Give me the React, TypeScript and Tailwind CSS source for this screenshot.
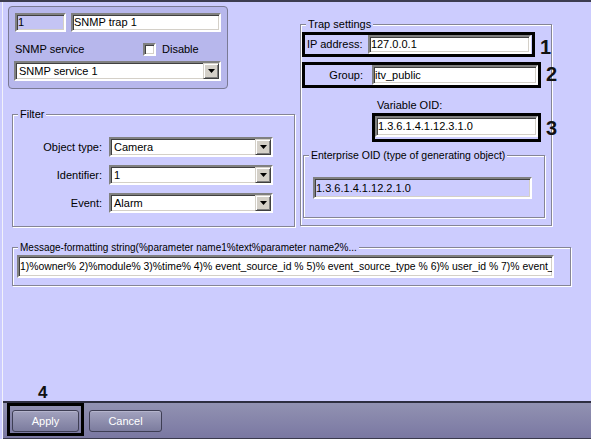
import clsx from 'clsx'
import type { ReactNode } from 'react'

const sunken =
  'border-2 border-t-[#808080] border-l-[#808080] border-r-white border-b-white shadow-[inset_1px_1px_0_#404040,inset_-1px_-1px_0_#d4d0c8]'

function TextBox({ value, className }: { value: string; className?: string }) {
  return (
    <div className={clsx('flex items-center overflow-hidden whitespace-nowrap pl-[1px]', sunken, className)}>
      {value}
    </div>
  )
}

function Combo({ value, className }: { value: string; className?: string }) {
  return (
    <div className={clsx('flex bg-white', sunken, className)}>
      <span className="flex flex-1 items-center overflow-hidden whitespace-nowrap pl-[3px]">{value}</span>
      <span className="flex w-[16px] items-center justify-center border border-t-[#d4d0c8] border-l-[#d4d0c8] border-r-[#404040] border-b-[#404040] bg-[#d4d0c8] shadow-[inset_1px_1px_0_#fff,inset_-1px_-1px_0_#808080]">
        <svg width="7" height="4" viewBox="0 0 7 4">
          <path d="M0 0h7L3.5 4z" fill="#000" />
        </svg>
      </span>
    </div>
  )
}

function GroupBox({
  label,
  className,
  labelClassName,
  children,
}: {
  label: string
  className?: string
  labelClassName?: string
  children?: ReactNode
}) {
  return (
    <div className={clsx('relative border border-[#858595] shadow-[inset_1px_1px_0_#fff,1px_1px_0_#fff]', className)}>
      <span
        className={clsx(
          'absolute -top-[7px] left-[5px] whitespace-nowrap bg-[#ccccfe] px-[2px] leading-[13px]',
          labelClassName
        )}
      >
        {label}
      </span>
      {children}
    </div>
  )
}

function Num({ n, className }: { n: string; className?: string }) {
  return <span className={clsx('ml-[5px] text-[20px] font-bold leading-[20px] text-[#111]', className)}>{n}</span>
}

function FilterRow({ label, value }: { label: string; value: string }) {
  return (
    <div className="flex h-[20px] items-center">
      <span className="w-[89px] text-right">{label}</span>
      <Combo value={value} className="ml-[7px] h-[20px] w-[164px]" />
    </div>
  )
}

const message =
  '1)%owner% 2)%module% 3)%time% 4)% event_source_id % 5)% event_source_type % 6)% user_id % 7)% event_action % 8)% event_params %'

export default function App() {
  return (
    <div className="h-[439px] w-[591px] overflow-hidden border-t-2 border-[#3c3c50] bg-[#ccccfe] pl-[2px] font-['Liberation_Sans',Arial,sans-serif] text-[11px] leading-[13px] text-black">
      <div className="flex h-full flex-col border-l border-[#f2f2fa]">
        <div className="flex">
          <div className="w-[297px]">
            {/* object panel */}
            <div className="ml-[5px] mt-[4px] h-[83px] w-[220px] rounded-[4px] border border-[#7a7a94] bg-[#b7b7ec]">
              <div className="mt-[6px] flex">
                <TextBox value="1" className="ml-[6px] h-[19px] w-[51px] bg-[#c4c4f4]" />
                <TextBox value="SNMP trap 1" className="ml-[5px] h-[19px] w-[150px] bg-white" />
              </div>
              <div className="mt-[9px] flex h-[17px] items-center">
                <span className="ml-[6px] w-[128px]">SNMP service</span>
                <span className={clsx('h-[13px] w-[13px] bg-white', sunken)} />
                <span className="ml-[6px]">Disable</span>
              </div>
              <Combo value="SNMP service 1" className="ml-[5px] mt-[3px] h-[20px] w-[207px]" />
            </div>

            <GroupBox label="Filter" className="ml-[9px] mt-[25px] h-[113px] w-[283px]">
              <div className="mt-[22px] flex flex-col gap-[8px]">
                <FilterRow label="Object type:" value="Camera" />
                <FilterRow label="Identifier:" value="1" />
                <FilterRow label="Event:" value="Alarm" />
              </div>
            </GroupBox>
          </div>

          <GroupBox label="Trap settings" className="mt-[22px] h-[202px] w-[252px]">
            <div className="ml-[1px] mt-[7px] flex items-start">
              <div className="flex h-[25px] w-[240px] items-center border-[3px] border-black">
                <span className="pl-[2px]">IP address:</span>
                <TextBox value="127.0.0.1" className="ml-auto mr-[1px] h-[19px] w-[163px] bg-white" />
              </div>
              <Num n="1" className="mt-[5px]" />
            </div>
            <div className="ml-[1px] mt-[5px] flex items-start">
              <div className="flex h-[26px] w-[240px] items-center border-[3px] border-black">
                <span className="w-[58px] text-right">Group:</span>
                <TextBox value="itv_public" className="ml-[9px] h-[20px] w-[166px] bg-white" />
              </div>
              <Num n="2" className="mt-[2px]" />
            </div>
            <div className="ml-[76px] mt-[11px] h-[13px]">Variable OID:</div>
            <div className="ml-[71px] mt-[1px] flex items-start">
              <div className="flex h-[29px] w-[170px] items-start border-[3px] border-black">
                <TextBox value="1.3.6.1.4.1.12.3.1.0" className="h-[21px] w-[163px] bg-white" />
              </div>
              <Num n="3" className="mt-[5px]" />
            </div>
            <GroupBox
              label="Enterprise OID (type of generating object)"
              labelClassName="text-[10.5px]"
              className="ml-[2px] mt-[13px] h-[63px] w-[242px]"
            >
              <TextBox value="1.3.6.1.4.1.12.2.1.0" className="ml-[9px] mt-[21px] h-[22px] w-[219px] bg-[#ccccfe]" />
            </GroupBox>
          </GroupBox>
        </div>

        <GroupBox
          label="Message-formatting string(%parameter name1%text%parameter name2%..."
          labelClassName="text-[10px]"
          className="ml-[9px] mt-[20px] h-[39px] w-[559px]"
        >
          <TextBox value={message} className="ml-[4px] mt-[7px] h-[23px] w-[537px] bg-white text-[10.4px]" />
        </GroupBox>

        <div className="flex-1" />
        <div className="h-[17px] pl-[35px] text-[17px] font-bold leading-[17px] text-[#111]">4</div>

        <div className="flex h-[38px] items-start border-t-2 border-b border-t-[#2e2e40] border-b-[#3a3a4c] bg-linear-to-b from-[#9292b2] to-[#7a78a2]">
          <div className="ml-[4px] h-[33px] w-[77px] border-[3px] border-black">
            <button
              type="button"
              className="ml-[2px] mt-[4px] flex h-[22px] w-[67px] items-center justify-center rounded-[3px] border border-[#3e3e54] bg-linear-to-b from-[#a2a2be] to-[#7c7c9e] text-white shadow-[inset_0_1px_0_#b4b4cc]"
            >
              Apply
            </button>
          </div>
          <button
            type="button"
            className="ml-[5px] mt-[7px] flex h-[22px] w-[73px] items-center justify-center rounded-[3px] border border-[#3e3e54] bg-linear-to-b from-[#a2a2be] to-[#7c7c9e] text-white shadow-[inset_0_1px_0_#b4b4cc]"
          >
            Cancel
          </button>
        </div>
      </div>
    </div>
  )
}
